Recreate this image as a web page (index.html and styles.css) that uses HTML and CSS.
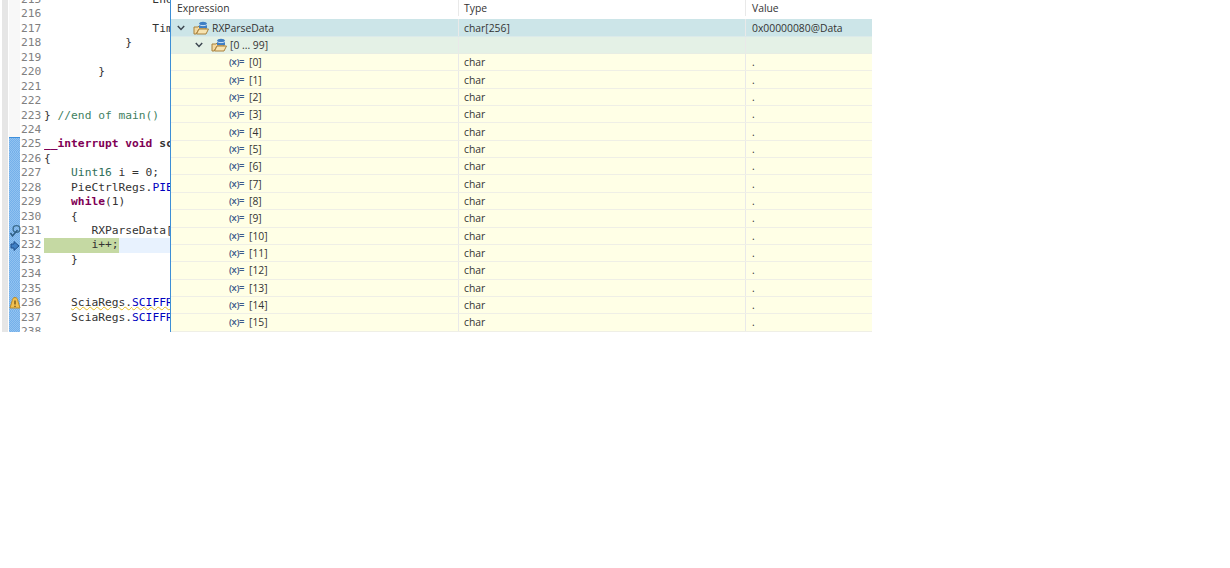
FILE: index.html
```html
<!DOCTYPE html>
<html lang="en">
<head>
<meta charset="utf-8">
<title>Debug expressions</title>
<link rel="stylesheet" href="styles.css">
</head>
<body>
<main class="app">
  <section class="editor">
    <div class="lines">
      <div class="line"><span class="mark"></span><span class="num">215</span><span class="code">                End</span></div>
      <div class="line"><span class="mark"></span><span class="num">216</span><span class="code"></span></div>
      <div class="line"><span class="mark"></span><span class="num">217</span><span class="code">                Timer</span></div>
      <div class="line"><span class="mark"></span><span class="num">218</span><span class="code">            }</span></div>
      <div class="line"><span class="mark"></span><span class="num">219</span><span class="code"></span></div>
      <div class="line"><span class="mark"></span><span class="num">220</span><span class="code">        }</span></div>
      <div class="line"><span class="mark"></span><span class="num">221</span><span class="code"></span></div>
      <div class="line"><span class="mark"></span><span class="num">222</span><span class="code"></span></div>
      <div class="line"><span class="mark"></span><span class="num">223</span><span class="code">} <span class="comment">//end of main()</span></span></div>
      <div class="line"><span class="mark"></span><span class="num">224</span><span class="code"></span></div>
      <div class="line range-start"><span class="mark on"></span><span class="num">225</span><span class="code"><span class="kw">__interrupt void</span> <span class="strong">sciaRxFifoIsr</span></span></div>
      <div class="line"><span class="mark on"></span><span class="num">226</span><span class="code">{</span></div>
      <div class="line"><span class="mark on"></span><span class="num">227</span><span class="code">    <span class="type">Uint16</span> i = 0;</span></div>
      <div class="line"><span class="mark on"></span><span class="num">228</span><span class="code">    PieCtrlRegs.<span class="field">PIEACK</span></span></div>
      <div class="line"><span class="mark on"></span><span class="num">229</span><span class="code">    <span class="kw">while</span>(1)</span></div>
      <div class="line"><span class="mark on"></span><span class="num">230</span><span class="code">    {</span></div>
      <div class="line"><span class="mark on"><svg class="icon" viewBox="0 0 12 14"><circle cx="7.500" cy="5" r="3.400" fill="none" stroke="#3d6d8f" stroke-width="1.400"/><path d="M1.500 9l2 3 5-6" fill="none" stroke="#2f5f86" stroke-width="1.600"/></svg></span><span class="num">231</span><span class="code">       RXParseData[i]</span></div>
      <div class="line current"><span class="mark on"><svg class="icon" viewBox="0 0 12 14"><path d="M2 5h3V2.500L10 7l-5 4.500V9H2z" fill="#3f7fc4" stroke="#1f4f8a"/></svg></span><span class="num">232</span><span class="code"><span class="hit">       i++;</span></span></div>
      <div class="line"><span class="mark on"></span><span class="num">233</span><span class="code">    }</span></div>
      <div class="line"><span class="mark on"></span><span class="num">234</span><span class="code"></span></div>
      <div class="line"><span class="mark on"></span><span class="num">235</span><span class="code"></span></div>
      <div class="line"><span class="mark on"><svg class="icon" viewBox="0 0 12 14"><path d="M6 1.500c2 0 2.600 1.600 2.800 3.200L11 12H1l2.200-7.300C3.400 3.100 4 1.500 6 1.500z" fill="#f2c04f" stroke="#b58a2c"/><path d="M6 4.500v4M6 9.800v1.200" stroke="#5a4210" stroke-width="1.200"/></svg></span><span class="num">236</span><span class="code">    <span class="warn">SciaRegs.<span class="field">SCIFFRX</span></span></span></div>
      <div class="line"><span class="mark on"></span><span class="num">237</span><span class="code">    SciaRegs.<span class="field">SCIFFRX</span></span></div>
      <div class="line"><span class="mark on"></span><span class="num">238</span><span class="code"></span></div>
    </div>
  </section>

  <section class="panel">
    <div class="row head"><span class="cell">Expression</span><span class="cell">Type</span><span class="cell">Value</span></div>

    <div class="row top">
      <span class="cell tree">
        <svg class="chev" viewBox="0 0 8 6"><path d="M.8 1l3.200 3.400L7.200 1" fill="none" stroke="#3c4650" stroke-width="1.500"/></svg>
        <svg class="obj" viewBox="0 0 16 14"><path d="M1 6h4l1-1h7v3H6L3 13H1z" fill="#f3d9a0" stroke="#a8813c"/><path d="M3.500 13l2.500-5h9.500l-2.500 5z" fill="#f7e3b0" stroke="#a8813c"/><path d="M6 3c0-3 8-3 8 0v4H6z" fill="#3f7fc4"/><path d="M6 3.500c1 1.500 7 1.500 8 0" fill="none" stroke="#cfe2f5"/></svg>
        <span>RXParseData</span>
      </span>
      <span class="cell">char[256]</span><span class="cell">0x00000080@Data</span>
    </div>

    <div class="row group">
      <span class="cell tree lvl1">
        <svg class="chev" viewBox="0 0 8 6"><path d="M.8 1l3.200 3.400L7.200 1" fill="none" stroke="#3c4650" stroke-width="1.500"/></svg>
        <svg class="obj" viewBox="0 0 16 14"><path d="M1 6h4l1-1h7v3H6L3 13H1z" fill="#f3d9a0" stroke="#a8813c"/><path d="M3.500 13l2.500-5h9.500l-2.500 5z" fill="#f7e3b0" stroke="#a8813c"/><path d="M6 3c0-3 8-3 8 0v4H6z" fill="#3f7fc4"/><path d="M6 3.500c1 1.500 7 1.500 8 0" fill="none" stroke="#cfe2f5"/></svg>
        <span>[0 ... 99]</span>
      </span>
      <span class="cell"></span><span class="cell"></span>
    </div>

    <div class="row item"><span class="cell tree lvl2"><span class="var">(x)=</span><span>[0]</span></span><span class="cell">char</span><span class="cell">.</span></div>
    <div class="row item"><span class="cell tree lvl2"><span class="var">(x)=</span><span>[1]</span></span><span class="cell">char</span><span class="cell">.</span></div>
    <div class="row item"><span class="cell tree lvl2"><span class="var">(x)=</span><span>[2]</span></span><span class="cell">char</span><span class="cell">.</span></div>
    <div class="row item"><span class="cell tree lvl2"><span class="var">(x)=</span><span>[3]</span></span><span class="cell">char</span><span class="cell">.</span></div>
    <div class="row item"><span class="cell tree lvl2"><span class="var">(x)=</span><span>[4]</span></span><span class="cell">char</span><span class="cell">.</span></div>
    <div class="row item"><span class="cell tree lvl2"><span class="var">(x)=</span><span>[5]</span></span><span class="cell">char</span><span class="cell">.</span></div>
    <div class="row item"><span class="cell tree lvl2"><span class="var">(x)=</span><span>[6]</span></span><span class="cell">char</span><span class="cell">.</span></div>
    <div class="row item"><span class="cell tree lvl2"><span class="var">(x)=</span><span>[7]</span></span><span class="cell">char</span><span class="cell">.</span></div>
    <div class="row item"><span class="cell tree lvl2"><span class="var">(x)=</span><span>[8]</span></span><span class="cell">char</span><span class="cell">.</span></div>
    <div class="row item"><span class="cell tree lvl2"><span class="var">(x)=</span><span>[9]</span></span><span class="cell">char</span><span class="cell">.</span></div>
    <div class="row item"><span class="cell tree lvl2"><span class="var">(x)=</span><span>[10]</span></span><span class="cell">char</span><span class="cell">.</span></div>
    <div class="row item"><span class="cell tree lvl2"><span class="var">(x)=</span><span>[11]</span></span><span class="cell">char</span><span class="cell">.</span></div>
    <div class="row item"><span class="cell tree lvl2"><span class="var">(x)=</span><span>[12]</span></span><span class="cell">char</span><span class="cell">.</span></div>
    <div class="row item"><span class="cell tree lvl2"><span class="var">(x)=</span><span>[13]</span></span><span class="cell">char</span><span class="cell">.</span></div>
    <div class="row item"><span class="cell tree lvl2"><span class="var">(x)=</span><span>[14]</span></span><span class="cell">char</span><span class="cell">.</span></div>
    <div class="row item"><span class="cell tree lvl2"><span class="var">(x)=</span><span>[15]</span></span><span class="cell">char</span><span class="cell">.</span></div>
  </section>
</main>
</body>
</html>
```

FILE: styles.css
```css
html, body {
  margin: 0;
  background: #fff;
}

.app {
  display: flex;
  width: 872px;
  height: 332px;
  overflow: hidden;
}

/* Source editor */
.editor {
  width: 170px;
  flex: none;
  overflow: hidden;
  padding-left: 2px;
  box-sizing: border-box;
}

.lines {
  margin-top: -7px;
  border-left: 6px solid #e6e6e6;
}

.line {
  display: flex;
  height: 14.45px;
  line-height: 14.45px;
  font-family: "DejaVu Sans Mono", "Liberation Mono", monospace;
  font-size: 11.25px;
  color: #333;
}

.mark {
  width: 11px;
  margin-left: 1px;
  flex: none;
  display: flex;
  align-items: center;
  justify-content: center;
  background: #f8f8f8;
}

.mark.on {
  background-color: #7fb6e8;
  background-image: conic-gradient(#74b0ea 25%, #92c2f0 0 50%, #74b0ea 0 75%, #92c2f0 0);
  background-size: 2px 2px;
}

.range-start .mark {
  box-shadow: inset 0 1px 0 #3d8fdc;
}

.icon {
  width: 12px;
  height: 14px;
  flex: none;
}

.num {
  width: 21px;
  flex: none;
  padding-left: 1px;
  box-sizing: border-box;
  color: #808080;
  margin-right: 3px;
}

.code {
  flex: 1;
  white-space: pre;
  overflow: hidden;
}

.current .code {
  background: #e8f2fe;
}

.hit {
  display: inline-block;
  height: 100%;
  background: #c5d9a3;
}

.kw {
  color: #7f0055;
  font-weight: 700;
}

.strong {
  font-weight: 700;
}

.comment {
  color: #3f7f5f;
}

.type {
  color: #2f6f5a;
}

.field {
  color: #0000c0;
}

.warn {
  text-decoration: underline wavy #e8c020 1px;
  text-underline-offset: 0;
}

/* Expressions view */
.panel {
  flex: 1;
  border-left: 1px solid #3d8fd6;
  font-family: "Open Sans", "Noto Sans", sans-serif;
  font-size: 10.35px;
  color: #333;
}

.row {
  display: grid;
  grid-template-columns: 287px 287px 1fr;
  height: 17.35px;
  line-height: 16px;
  box-sizing: border-box;
  border-bottom: 1.5px solid #efefe6;
}

.head {
  height: 19.4px;
  padding-bottom: 4px;
  background: #fff;
  border-bottom: 0;
}

.top {
  background: #cce5e8;
  border-bottom-color: #dbeaea;
}

.group {
  background: #e4f1e6;
  border-bottom-color: #e7ede4;
}

.item {
  background: #ffffe6;
}

.cell {
  display: flex;
  align-items: center;
  padding-left: 5px;
  white-space: nowrap;
  min-width: 0;
  box-sizing: border-box;
  border-left: 1px solid #e9e9e9;
}

.cell:first-child {
  border-left: 0;
  padding-left: 6px;
}

.cell:last-child {
  padding-left: 6px;
}

.cell.lvl1 {
  padding-left: 24px;
}

.cell.lvl2 {
  padding-left: 58px;
}

.chev {
  width: 8px;
  height: 6px;
  flex: none;
  margin-right: 8px;
}

.obj {
  width: 16px;
  height: 14px;
  flex: none;
  margin-right: 3px;
}

.var {
  width: 20px;
  flex: none;
  font-size: 9.5px;
  font-weight: 600;
  letter-spacing: -0.4px;
  color: #3c5a8a;
}
```
